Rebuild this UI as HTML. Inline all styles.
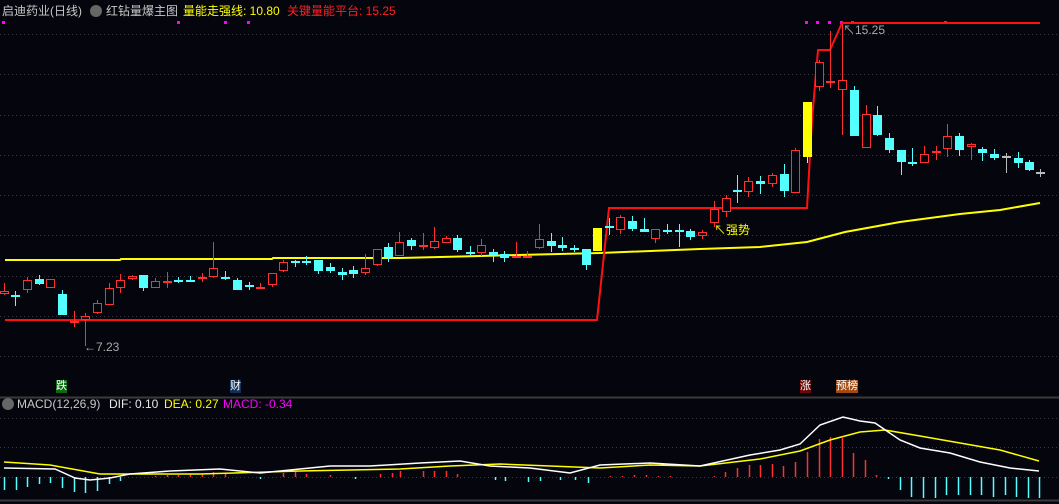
<!DOCTYPE html>
<html><head><meta charset="utf-8"><style>
html,body{margin:0;padding:0;background:#05050e;}
body{width:1059px;height:504px;overflow:hidden;position:relative;font-family:"Liberation Sans","Noto Sans CJK SC",sans-serif;}
.t{position:absolute;font-size:12px;white-space:nowrap;line-height:14px;}
svg{position:absolute;left:0;top:0;}
</style></head><body>
<svg id="s" width="1059" height="504" xmlns="http://www.w3.org/2000/svg"></svg>
<div class="t" style="left:2px;top:4px;color:#c8c8c8">启迪药业(日线)</div>
<div style="position:absolute;left:90px;top:5px;width:12px;height:12px;border-radius:6px;background:#666"></div>
<div class="t" style="left:106px;top:4px;color:#c8c8c8">红钻量爆主图</div>
<div class="t" style="left:183px;top:4px;color:#ffff00">量能走强线: 10.80</div>
<div class="t" style="left:287px;top:4px;color:#ff2020">关键量能平台: 15.25</div>
<div style="position:absolute;left:2px;top:398px;width:12px;height:12px;border-radius:6px;background:#666"></div>
<div class="t" style="left:17px;top:397px;color:#c8c8c8">MACD(12,26,9)</div>
<div class="t" style="left:109px;top:397px;color:#e8e8e8">DIF: 0.10</div>
<div class="t" style="left:164px;top:397px;color:#ffff00">DEA: 0.27</div>
<div class="t" style="left:223px;top:397px;color:#ff00ff">MACD: -0.34</div>
<div class="t" style="left:56px;top:380px;color:#fff;background:#0a6a10;font-size:11px;line-height:13px">跌</div>
<div class="t" style="left:230px;top:380px;color:#fff;background:#10305a;font-size:11px;line-height:13px">财</div>
<div class="t" style="left:800px;top:380px;color:#fff;background:#6a0808;font-size:11px;line-height:13px">涨</div>
<div class="t" style="left:836px;top:380px;color:#fff;background:#a04810;font-size:11px;line-height:13px">预榜</div>
<div class="t" style="left:84px;top:340px;color:#aaa">←7.23</div>
<div class="t" style="left:843px;top:23px;color:#aaa">↖15.25</div>
<div class="t" style="left:714px;top:223px;color:#ffff00">↖强势</div>
<script>
var s=document.getElementById('s'),h='';
function L(x1,y1,x2,y2,c,w){h+='<line x1="'+x1+'" y1="'+y1+'" x2="'+x2+'" y2="'+y2+'" stroke="'+c+'" stroke-width="'+(w||1)+'"/>';}
[34,74,115,155,195,235,276,316,356,418,447,477].forEach(function(y){h+='<line x1="0" y1="'+(y+.5)+'" x2="1059" y2="'+(y+.5)+'" stroke="#3a3a44" stroke-dasharray="1,3"/>';});
L(0,397.5,1059,397.5,'#3a3a3a',2);L(0,500.5,1059,500.5,'#3a3a3a',2);
[3,178,225,248,806,817,829,841,852,945].forEach(function(x){h+='<rect x="'+(x-1)+'" y="21" width="3" height="3" fill="#f0f"/>';});
var C=[[4,291,294,283,295,'r'],[15,295,295,291,306,'c'],[27,280,290,277,293,'r'],[39,279,284,275,285,'c'],[50,279,288,279,288,'r'],[62,294,315,290,315,'c'],[74,321,321,311,327,'r'],[85,316,320,313,346,'r'],[97,303,313,300,314,'r'],[109,288,305,283,305,'r'],[120,280,288,274,293,'r'],[132,276,279,275,280,'r'],[143,275,288,275,291,'c'],[155,281,288,278,288,'r'],[167,281,281,272,288,'r'],[178,280,280,277,283,'c'],[190,280,280,276,282,'c'],[202,277,279,273,282,'r'],[213,268,277,242,278,'r'],[225,277,277,271,280,'c'],[237,280,290,278,290,'c'],[249,285,287,282,290,'c'],[260,287,289,283,289,'r'],[272,273,285,273,287,'r'],[283,262,271,260,272,'r'],[295,261,263,260,267,'c'],[306,261,261,256,265,'c'],[318,260,271,260,274,'c'],[330,267,271,263,273,'c'],[342,272,275,268,280,'c'],[353,270,274,266,278,'c'],
[365,268,273,254,275,'r'],[377,249,265,249,266,'r'],[388,247,257,243,262,'c'],[399,242,256,232,256,'r'],[411,240,246,238,250,'c'],[423,245,247,233,250,'r'],[434,241,248,227,249,'r'],[446,238,243,236,243,'r'],[457,238,250,235,252,'c'],[470,252,252,246,256,'c'],[481,245,253,239,256,'r'],[493,252,255,249,262,'c'],[504,254,258,251,262,'c'],[516,256,257,242,257,'r'],[527,256,258,251,258,'r'],[539,239,248,224,249,'r'],[551,241,246,233,252,'c'],[562,245,248,237,251,'c'],[574,248,250,245,252,'c'],[586,249,265,249,270,'c'],[597,228,251,228,251,'y'],[609,226,226,218,235,'c'],[620,217,230,215,234,'r'],[632,221,229,216,231,'c'],[644,229,232,218,232,'c'],[655,229,239,229,243,'r'],[667,230,230,224,234,'c'],[679,230,230,224,247,'c'],[690,231,237,229,240,'c'],[702,232,236,230,239,'r'],
[714,209,223,201,227,'r'],[726,198,212,195,217,'r'],[737,190,190,175,203,'c'],[748,181,192,177,197,'r'],[760,181,184,176,194,'c'],[772,175,184,173,187,'r'],[784,174,191,164,197,'c'],[795,150,193,148,193,'r'],[807,102,157,102,163,'y'],[819,62,87,60,91,'r'],[830,81,81,31,88,'r'],[842,80,90,24,135,'r'],[854,90,136,86,136,'c'],[866,114,148,105,148,'r'],[877,115,135,106,136,'c'],[889,138,150,133,153,'c'],[901,150,162,150,175,'c'],[912,162,164,148,166,'c'],[924,154,163,146,163,'r'],[936,151,153,146,160,'r'],[947,136,149,124,157,'r'],[959,136,150,133,156,'c'],[971,144,147,143,160,'r'],[982,149,153,147,161,'c'],[994,154,158,149,160,'c'],[1006,156,156,153,173,'g'],[1018,158,163,152,168,'c'],[1029,162,170,160,171,'c'],[1040,172,172,169,177,'g']];
// yellow & red lines first
h+='<polyline fill="none" stroke="#ffff00" stroke-width="2" points="5,260 120,260 121,259 272,259 273,258 400,258 480,256 600,253 700,249 760,247 807,242 845,232 900,222 960,214 1000,210 1040,203"/>';
h+='<polyline fill="none" stroke="#ff1010" stroke-width="2" points="5,320 597,320 609,208 807,208 812,120 818,50 830,50 842,23 1040,23"/>';
C.forEach(function(c){var x=c[0],col=c[5]=='r'?'#ff3030':c[5]=='c'?'#54ffff':c[5]=='y'?'#ffff00':'#bbbbbb';
L(x+.5,c[3],x+.5,c[4],col,1);
if(c[2]-c[1]<2){h+='<rect x="'+(x-4)+'" y="'+c[1]+'" width="9" height="2" fill="'+col+'"/>';}
else if(c[5]=='r'){h+='<rect x="'+(x-3.5)+'" y="'+(c[1]+.5)+'" width="8" height="'+(c[2]-c[1]-1)+'" fill="#05050e" stroke="'+col+'"/>';}
else h+='<rect x="'+(x-4)+'" y="'+c[1]+'" width="9" height="'+(c[2]-c[1])+'" fill="'+col+'"/>';});
// macd histogram
var H=[[4,-13],[16,-13],[27,-10],[39,-7],[50,-6],[62,-11],[74,-15],[85,-16],[97,-14],[109,-7],[120,-4],[155,1],[167,2],[178,2],[190,3],[202,3],[213,5],[225,4],[260,-2],[283,4],[295,5],[306,3],[330,2],[355,-2],[380,3],[392,4],[400,6],[423,6],[434,6],[446,6],[457,3],[495,-3],[505,-4],[528,-5],[540,-4],[560,-3],[575,-3],[588,-6],[610,1],[622,1],[634,2],[646,2],[658,1],[670,1],[714,1],[725,5],[737,9],[749,12],[760,12],[772,13],[783,11],[795,15],[807,25],[819,38],[830,40],[842,39],[853,24],[865,17],[876,2],[888,-2],[900,-13],[911,-20],[923,-21],[935,-21],[946,-18],[958,-18],[970,-18],[981,-18],[993,-20],[1005,-18],[1016,-20],[1028,-21],[1039,-21]];
H.forEach(function(b){var y=477,col=b[1]>0?'#ff3030':'#54ffff';L(b[0]+.5,y,b[0]+.5,y-b[1],col,1.5);});
h+='<polyline fill="none" stroke="#ffff00" stroke-width="1.5" points="4,462 50,465 100,474 200,474 300,471 400,469 450,466 500,464 550,466 600,468 650,465 700,466 760,459 800,451 830,440 860,432 885,430 920,436 960,443 1000,450 1039,461"/>';
h+='<polyline fill="none" stroke="#ffffff" stroke-width="1.5" points="4,468 55,469 75,478 90,480 110,478 130,474 170,471 220,469 260,473 300,469 330,466 370,466 420,463 460,461 490,466 530,468 570,473 600,465 650,463 700,466 750,455 780,450 800,444 820,425 843,417 860,421 875,423 900,440 920,448 950,453 980,462 1010,468 1039,471"/>';
s.innerHTML=h;
</script>
</body></html>
